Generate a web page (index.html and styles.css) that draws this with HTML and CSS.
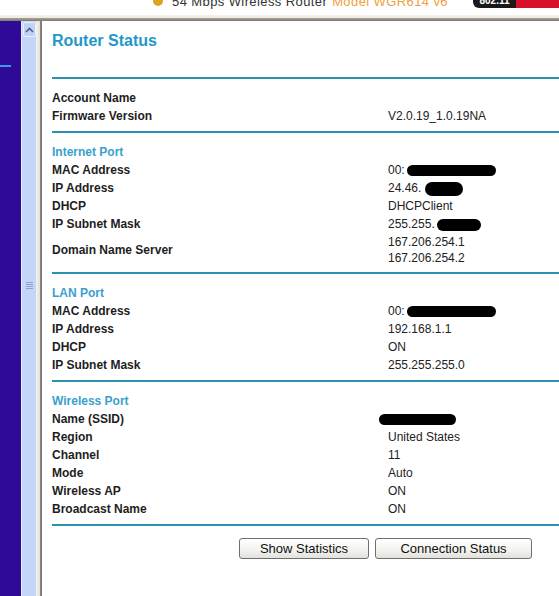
FILE: index.html
```
<html lang="en">
<head>
    <meta charset="UTF-8">
    <title>Router Status</title>
    <link rel="stylesheet" href="styles.css">
</head>
<body>
    <div class="topbar">
        <div class="brand">
            <span class="dot"></span>
            <span class="product">54 Mbps Wireless Router</span>
            <span class="model">Model WGR614 v6</span>
        </div>
        <div class="badge"><span class="badge-black">802.11</span><span class="badge-red"></span></div>
    </div>
    <div class="frame-top"></div>
    <div class="main">
        <div class="menu"><div class="menu-mark"></div></div>
        <div class="scrollbar">
            <div class="scroll-up">
                <svg width="9" height="6" viewBox="0 0 9 6"><path d="M1 5 L4.5 1.5 L8 5" fill="none" stroke="#4d5f86" stroke-width="1.6"/></svg>
            </div>
            <div class="scroll-grip"><span></span><span></span><span></span><span></span></div>
        </div>
        <div class="divider"></div>
        <div class="content">
            <h1 class="title">Router Status</h1>

            <div class="section">
                <div class="row"><span class="label">Account Name</span><span class="value"></span></div>
                <div class="row"><span class="label">Firmware Version</span><span class="value">V2.0.19_1.0.19NA</span></div>
            </div>

            <div class="section">
                <div class="row"><span class="heading">Internet Port</span></div>
                <div class="row"><span class="label">MAC Address</span><span class="value">00:<i class="blot blot-mac"></i></span></div>
                <div class="row"><span class="label">IP Address</span><span class="value">24.46.<i class="blot blot-ip"></i></span></div>
                <div class="row"><span class="label">DHCP</span><span class="value">DHCPClient</span></div>
                <div class="row"><span class="label">IP Subnet Mask</span><span class="value">255.255.<i class="blot blot-mask"></i></span></div>
                <div class="row row-dns"><span class="label">Domain Name Server</span><span class="value">167.206.254.1<br>167.206.254.2</span></div>
            </div>

            <div class="section">
                <div class="row"><span class="heading">LAN Port</span></div>
                <div class="row"><span class="label">MAC Address</span><span class="value">00:<i class="blot blot-mac"></i></span></div>
                <div class="row"><span class="label">IP Address</span><span class="value">192.168.1.1</span></div>
                <div class="row"><span class="label">DHCP</span><span class="value">ON</span></div>
                <div class="row"><span class="label">IP Subnet Mask</span><span class="value">255.255.255.0</span></div>
            </div>

            <div class="section">
                <div class="row"><span class="heading">Wireless Port</span></div>
                <div class="row"><span class="label">Name (SSID)</span><span class="value"><i class="blot blot-ssid"></i></span></div>
                <div class="row"><span class="label">Region</span><span class="value">United States</span></div>
                <div class="row"><span class="label">Channel</span><span class="value">11</span></div>
                <div class="row"><span class="label">Mode</span><span class="value">Auto</span></div>
                <div class="row"><span class="label">Wireless AP</span><span class="value">ON</span></div>
                <div class="row"><span class="label">Broadcast Name</span><span class="value">ON</span></div>
            </div>

            <div class="rule"></div>
            <div class="buttons">
                <button type="button" class="btn btn-stats">Show Statistics</button>
                <button type="button" class="btn btn-conn">Connection Status</button>
            </div>
        </div>
    </div>
</body>
</html>
```

FILE: styles.css
```
html, body
{
    margin: 0;
    padding: 0;
    width: 559px;
    height: 596px;
    overflow: hidden;
    background: #fff;
    font-family: "Liberation Sans", Arial, sans-serif;
}
.topbar
{
    height: 15px;
    display: flex;
    overflow: hidden;
    background: #fff;
}
.brand
{
    margin-top: -10px;
    padding-left: 153px;
    height: 22px;
    display: flex;
    align-items: center;
    font-size: 13px;
    letter-spacing: 0.4px;
    white-space: nowrap;
    flex: 1;
}
.dot
{
    width: 10px;
    height: 10px;
    border-radius: 50%;
    background: #d9a520;
    margin-right: 9px;
    margin-top: -1px;
}
.product
{
    color: #333;
}
.model
{
    color: #f0a040;
    margin-left: 5px;
}
.badge
{
    display: flex;
    height: 8px;
    width: 86px;
    overflow: hidden;
    border-bottom-left-radius: 6px;
}
.badge-black
{
    width: 43px;
    background: #1a1a1a;
    color: #fff;
    font-size: 10px;
    font-weight: bold;
    line-height: 0;
    text-align: center;
    padding-top: 1px;
}
.badge-red
{
    flex: 1;
    background: #d9102a;
}
.frame-top
{
    height: 6px;
    background: linear-gradient(#f6f2ea 0, #efe9dd 50%, #a9a49a 50%, #7d7870 100%);
}
.main
{
    display: flex;
    height: 575px;
}
.menu
{
    width: 21px;
    background: #2f0a96;
    padding-top: 44px;
    box-sizing: border-box;
}
.menu-mark
{
    width: 11px;
    height: 2px;
    background: #3f9ae6;
}
.scrollbar
{
    width: 15px;
    background: #c5d5f7;
    border-left: 1px solid #e6eefc;
    box-sizing: border-box;
    display: flex;
    flex-direction: column;
    align-items: center;
}
.scroll-up
{
    width: 13px;
    height: 15px;
    margin-top: 1px;
    background: #c2d2f6;
    border: 1px solid #e8effd;
    border-radius: 2px;
    box-sizing: border-box;
    display: flex;
    align-items: center;
    justify-content: center;
}
.scroll-grip
{
    margin-top: 245px;
    display: flex;
    flex-direction: column;
    gap: 1px;
}
.scroll-grip span
{
    display: block;
    width: 7px;
    height: 1px;
    background: #8aa2d4;
}
.divider
{
    width: 6px;
    background: linear-gradient(to right, #f4f3ee 0, #e3e1d9 60%, #8c8a84 70%, #6e6c66 100%);
}
.content
{
    flex: 1;
    padding-left: 10px;
    color: #222;
}
.title
{
    margin: 11px 0 27px 0;
    font-size: 16px;
    line-height: 18px;
    font-weight: bold;
    color: #1f98c6;
}
.section
{
    border-top: 2px solid #2a91ae;
    padding: 10px 0 6px 0;
}
.row
{
    display: grid;
    grid-template-columns: 336px 1fr;
    align-items: center;
    height: 18px;
    font-size: 12px;
    line-height: 18px;
}
.row-dns
{
    height: 33px;
}
.row-dns .value
{
    line-height: 16px;
}
.label
{
    font-weight: bold;
    color: #1e1e1e;
}
.heading
{
    font-weight: bold;
    color: #3aa0cd;
}
.value
{
    color: #222;
    white-space: nowrap;
}
.blot
{
    display: inline-block;
    background: #000;
    border-radius: 7px;
    vertical-align: middle;
}
.blot-mac
{
    width: 89px;
    height: 11px;
    margin-left: 2px;
}
.blot-ip
{
    width: 38px;
    height: 14px;
    margin-left: 4px;
}
.blot-mask
{
    width: 44px;
    height: 12px;
    margin-left: 2px;
}
.blot-ssid
{
    width: 77px;
    height: 11px;
    margin-left: -9px;
    vertical-align: 6px;
}
.rule
{
    border-top: 2px solid #2a91ae;
}
.buttons
{
    display: flex;
    gap: 6px;
    padding: 12px 0 0 187px;
}
.btn
{
    height: 21px;
    padding: 0;
    font-family: "Liberation Sans", Arial, sans-serif;
    font-size: 13px;
    color: #111;
    background: linear-gradient(#ffffff, #f2f2ee 60%, #e2e1dc);
    border: 1px solid #6f6f6f;
    border-radius: 3px;
}
.btn-stats
{
    width: 130px;
}
.btn-conn
{
    width: 157px;
}
```
